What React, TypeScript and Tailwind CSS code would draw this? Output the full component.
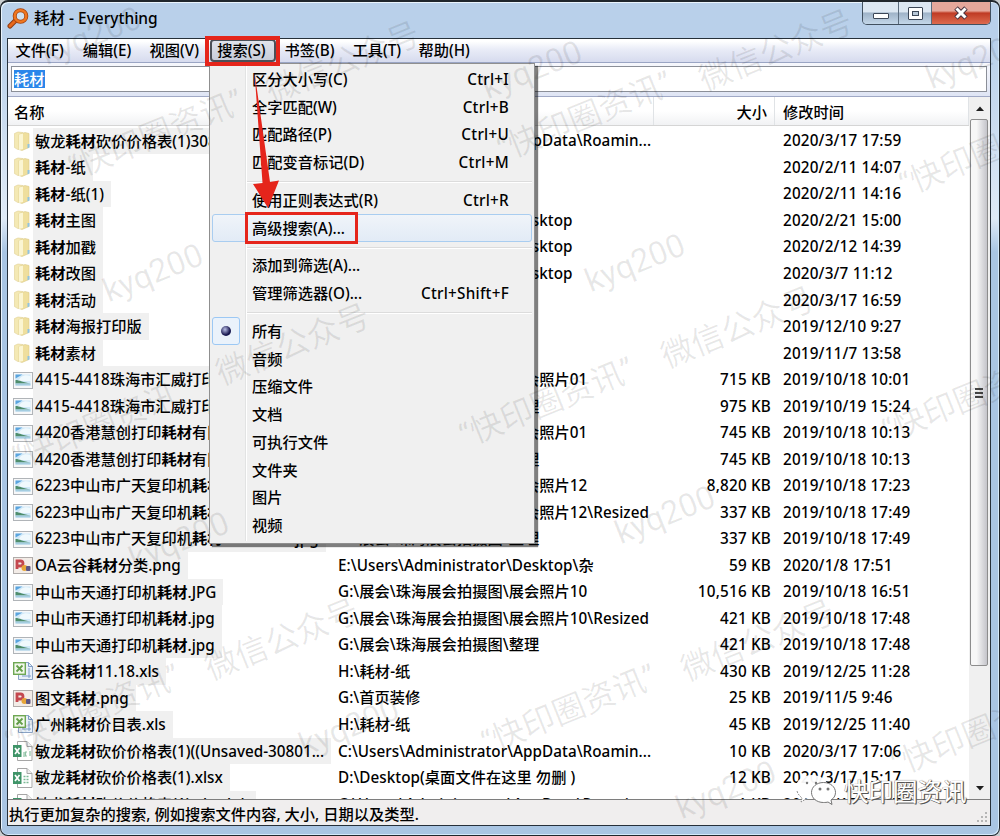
import type { ReactNode } from 'react'

type IconKind = 'folder' | 'jpg' | 'png' | 'xls' | 'csv' | 'xlsx'

interface FileRow {
  icon: IconKind
  name: string
  path: string
  size?: string
  date: string
}

const KEYWORD = '耗材'
const DESKTOP = 'E:\\Users\\Administrator\\Desktop'
const ROAMING = 'C:\\Users\\Administrator\\AppData\\Roamin...'
const PHOTOS = 'G:\\展会\\珠海展会拍摄图\\'

const files: FileRow[] = [
  { icon: 'folder', name: '敏龙耗材砍价价格表(1)308...', path: ROAMING, date: '2020/3/17 17:59' },
  { icon: 'folder', name: '耗材-纸', path: 'H:\\', date: '2020/2/11 14:07' },
  { icon: 'folder', name: '耗材-纸(1)', path: 'H:\\', date: '2020/2/11 14:16' },
  { icon: 'folder', name: '耗材主图', path: DESKTOP, date: '2020/2/21 15:00' },
  { icon: 'folder', name: '耗材加戳', path: DESKTOP, date: '2020/2/12 14:39' },
  { icon: 'folder', name: '耗材改图', path: DESKTOP, date: '2020/3/7 11:12' },
  { icon: 'folder', name: '耗材活动', path: 'G:\\', date: '2020/3/17 16:59' },
  { icon: 'folder', name: '耗材海报打印版', path: 'G:\\', date: '2019/12/10 9:27' },
  { icon: 'folder', name: '耗材素材', path: 'G:\\', date: '2019/11/7 13:58' },
  { icon: 'jpg', name: '4415-4418珠海市汇威打印耗材.JPG', path: PHOTOS + '展会照片01', size: '715 KB', date: '2019/10/18 10:01' },
  { icon: 'jpg', name: '4415-4418珠海市汇威打印耗材.jpg', path: PHOTOS + '整理', size: '975 KB', date: '2019/10/19 15:24' },
  { icon: 'jpg', name: '4420香港慧创打印耗材有限.JPG', path: PHOTOS + '展会照片01', size: '745 KB', date: '2019/10/18 10:13' },
  { icon: 'jpg', name: '4420香港慧创打印耗材有限.jpg', path: PHOTOS + '整理', size: '745 KB', date: '2019/10/18 10:13' },
  { icon: 'jpg', name: '6223中山市广天复印机耗材.JPG', path: PHOTOS + '展会照片12', size: '8,820 KB', date: '2019/10/18 17:23' },
  { icon: 'jpg', name: '6223中山市广天复印机耗材.jpg', path: PHOTOS + '展会照片12\\Resized', size: '337 KB', date: '2019/10/18 17:49' },
  { icon: 'jpg', name: '6223中山市广天复印机耗材Resized-3.jpg', path: PHOTOS + '整理', size: '337 KB', date: '2019/10/18 17:49' },
  { icon: 'png', name: 'OA云谷耗材分类.png', path: DESKTOP + '\\杂', size: '59 KB', date: '2020/1/8 17:51' },
  { icon: 'jpg', name: '中山市天通打印机耗材.JPG', path: PHOTOS + '展会照片10', size: '10,516 KB', date: '2019/10/18 16:51' },
  { icon: 'jpg', name: '中山市天通打印机耗材.jpg', path: PHOTOS + '展会照片10\\Resized', size: '421 KB', date: '2019/10/18 17:48' },
  { icon: 'jpg', name: '中山市天通打印机耗材.jpg', path: PHOTOS + '整理', size: '421 KB', date: '2019/10/18 17:48' },
  { icon: 'xls', name: '云谷耗材11.18.xls', path: 'H:\\耗材-纸', size: '430 KB', date: '2019/12/25 11:28' },
  { icon: 'png', name: '图文耗材.png', path: 'G:\\首页装修', size: '25 KB', date: '2019/11/5 9:46' },
  { icon: 'xls', name: '广州耗材价目表.xls', path: 'H:\\耗材-纸', size: '45 KB', date: '2019/12/25 11:40' },
  { icon: 'csv', name: '敏龙耗材砍价价格表(1)((Unsaved-30801...', path: ROAMING, size: '10 KB', date: '2020/3/17 17:06' },
  { icon: 'xlsx', name: '敏龙耗材砍价价格表(1).xlsx', path: 'D:\\Desktop(桌面文件在这里 勿删 )', size: '12 KB', date: '2020/3/17 15:17' },
  { icon: 'xlsx', name: '敏龙耗材砍价价格表(1).xlsx.lnk', path: ROAMING, size: '1 KB', date: '2020/3/17 15:17' },
]

const menus = ['文件(F)', '编辑(E)', '视图(V)', '搜索(S)', '书签(B)', '工具(T)', '帮助(H)']

interface MenuEntry {
  label: string
  keys?: string
  hover?: boolean
  checked?: boolean
}

const menuGroups: MenuEntry[][] = [
  [
    { label: '区分大小写(C)', keys: 'Ctrl+I' },
    { label: '全字匹配(W)', keys: 'Ctrl+B' },
    { label: '匹配路径(P)', keys: 'Ctrl+U' },
    { label: '匹配变音标记(D)', keys: 'Ctrl+M' },
  ],
  [
    { label: '使用正则表达式(R)', keys: 'Ctrl+R' },
    { label: '高级搜索(A)...', hover: true },
  ],
  [{ label: '添加到筛选(A)...' }, { label: '管理筛选器(O)...', keys: 'Ctrl+Shift+F' }],
  [
    { label: '所有', checked: true },
    { label: '音频' },
    { label: '压缩文件' },
    { label: '文档' },
    { label: '可执行文件' },
    { label: '文件夹' },
    { label: '图片' },
    { label: '视频' },
  ],
]

// 水印：每项为文字和中心点坐标
const watermarks: { text: string; x: number; y: number }[] = [
  { text: 'kyq200', x: 91, y: 36 },
  { text: 'kyq200', x: 532, y: 70 },
  { text: 'kyq200', x: 976, y: 60 },
  { text: 'kyq200', x: 153, y: 273 },
  { text: 'kyq200', x: 635, y: 263 },
  { text: 'kyq200', x: 179, y: 541 },
  { text: 'kyq200', x: 665, y: 515 },
  { text: 'kyq200', x: 349, y: 727 },
  { text: 'kyq200', x: 726, y: 790 },
  { text: '微信公众号', x: 343, y: 63 },
  { text: '微信公众号', x: 776, y: 51 },
  { text: '微信公众号', x: 293, y: 345 },
  { text: '微信公众号', x: 738, y: 328 },
  { text: '微信公众号', x: 282, y: 640 },
  { text: '微信公众号', x: 758, y: 641 },
  { text: '“快印圈资讯”', x: 156, y: 135 },
  { text: '“快印圈资讯”', x: 585, y: 117 },
  { text: '“快印圈资讯”', x: 987, y: 152 },
  { text: '“快印圈资讯”', x: 100, y: 425 },
  { text: '“快印圈资讯”', x: 547, y: 403 },
  { text: '“快印圈资讯”', x: 970, y: 398 },
  { text: '“快印圈资讯”', x: 93, y: 710 },
  { text: '“快印圈资讯”', x: 569, y: 710 },
  { text: '“快印圈资讯”', x: 979, y: 732 },
]

function FileIcon({ kind }: { kind: IconKind }) {
  if (kind === 'folder') {
    return (
      <svg width="20" height="22" viewBox="0 0 20 22">
        <path d="M1.500 3.500 5 2l5 .6v15.800l-5 1.200-3.500-2z" fill="#f4e9b4" stroke="#e0d093" strokeWidth=".6" />
        <path d="m6 4.500 6-2 4 1V17.500L9 20.500l-3-1z" fill="#efdf9d" stroke="#dac988" strokeWidth=".6" />
        <path d="m6 4.500 4-1V19l-4 1z" fill="#fbf5d2" />
        <path d="M14.500 14h2v3.500l-2 .8z" fill="#8fc3e2" />
      </svg>
    )
  }
  if (kind === 'jpg') {
    return (
      <svg width="20" height="22" viewBox="0 0 20 22">
        <rect x=".5" y="3.500" width="19" height="16" fill="#f7f8f9" stroke="#b0b4b8" />
        <path d="M2.500 5.500h15v11h-15z" fill="#cfe8f8" />
        <path d="M2.500 5.500h7l-7 4z" fill="#5aa4de" />
        <path d="M8 8c3-2 6-2 9.500-1v5H5z" fill="#f0f9fd" />
        <path d="M2.500 11c4 0 8 2.500 15 3.500h-15z" fill="#4f8d6c" />
        <path d="M2.500 14.500h15v2h-15z" fill="#a4cde0" />
      </svg>
    )
  }
  if (kind === 'png') {
    return (
      <svg width="20" height="22" viewBox="0 0 20 22">
        <rect x=".5" y="3.500" width="19" height="16" fill="#f3ece7" stroke="#b0acaa" />
        <path d="M4 15V7h3.500a2.500 2.500 0 0 1 0 5H5" fill="none" stroke="#c4484f" strokeWidth="2.800" />
        <circle cx="11.500" cy="14" r="3" fill="#e7a63a" />
        <rect x="13" y="12" width="4.500" height="5" rx="1" fill="#5d5785" />
      </svg>
    )
  }
  if (kind === 'xls') {
    return (
      <svg width="20" height="22" viewBox="0 0 20 22">
        <path d="M5.500 2.500h10l4 4v13h-14z" fill="#e8f0fa" stroke="#8aa3c4" />
        <path d="M15.500 2.500v4h4M16 8v10M9 16h9" fill="none" stroke="#7e9dc8" />
        <rect x=".7" y="2.700" width="11.600" height="11.600" fill="#f2f8ec" stroke="#6fa854" strokeWidth="1.400" />
        <path d="m3.500 5.500 6 6m0-6-6 6" stroke="#65a04b" strokeWidth="1.800" />
      </svg>
    )
  }
  return (
    <svg width="20" height="22" viewBox="0 0 20 22">
      <path d="M4.500 1.500H14l5 5v14H4.500z" fill="#fff" stroke="#a6a6a6" />
      <path d="M14 1.500v5h5" fill="#eee" stroke="#a6a6a6" />
      {kind === 'csv' ? (
        <path d="M11 12v5m3-5h-1.500v4H14m3-5v5" fill="none" stroke="#8fc2a4" strokeWidth="1.200" />
      ) : (
        <path d="M10.500 9.500h6m-6 3h6m-6 3h6" stroke="#7dba96" strokeWidth="1.500" strokeDasharray="2 1" />
      )}
      <rect y="5" width="8.500" height="12" fill="#3f9468" />
      <path d="m2 8 4.500 6m0-6L2 14" stroke="#fff" strokeWidth="1.700" />
    </svg>
  )
}

// 把关键字加粗显示
function highlight(name: string): ReactNode {
  const i = name.indexOf(KEYWORD)
  if (i < 0) return name
  return (
    <>
      {name.slice(0, i)}
      <b className="font-bold">{KEYWORD}</b>
      {name.slice(i + KEYWORD.length)}
    </>
  )
}

function TitleBar() {
  return (
    <div className="flex h-[36px] shrink-0 items-start justify-between">
      <div className="flex items-center pt-[4px]">
        <svg width="22" height="22" viewBox="0 0 22 22">
          <path d="m9 13-6 6" stroke="#8c3a10" strokeWidth="5" strokeLinecap="round" />
          <path d="m9 13-6 6" stroke="#e8681c" strokeWidth="3" strokeLinecap="round" />
          <circle cx="13.500" cy="9" r="5.800" fill="#cfe0f0" stroke="#a3410f" strokeWidth="4" />
          <circle cx="13.500" cy="9" r="5.800" fill="none" stroke="#f0761f" strokeWidth="2.400" />
        </svg>
        <span className="ml-[5px] text-[15.500px] leading-[24px]">耗材 - Everything</span>
      </div>
      <div className="mr-[2px] flex h-[23px] overflow-hidden rounded-b-[5px] border border-t-0 border-[#41505f]">
        <div className="flex w-[36px] items-center justify-center border-r border-[#5b6c7e] bg-linear-to-b from-[#dce7f2] from-45% via-[#9fb3c8] via-50% to-[#c4d7e9]">
          <span className="mt-[6px] h-[6px] w-[16px] rounded-[1px] border border-[#3c4757] bg-white" />
        </div>
        <div className="flex w-[33px] items-center justify-center border-r border-[#5b6c7e] bg-linear-to-b from-[#dce7f2] from-45% via-[#9fb3c8] via-50% to-[#c4d7e9]">
          <span className="flex h-[13px] w-[15px] items-center justify-center rounded-[1px] border border-[#3c4757] bg-white">
            <span className="h-[5px] w-[7px] border border-[#3c4757] bg-[#b9c9d8]" />
          </span>
        </div>
        <div className="flex w-[58px] items-center justify-center bg-linear-to-b from-[#e5a79b] from-40% via-[#bf3a24] via-50% to-[#dd6a4e]">
          <svg width="16" height="14" viewBox="0 0 16 14">
            <path d="m3 2 10 10M13 2 3 12" stroke="#4a3440" strokeWidth="5" />
            <path d="m3.500 2.500 9 9m0-9-9 9" stroke="#fff" strokeWidth="3" />
          </svg>
        </div>
      </div>
    </div>
  )
}

function MenuBar() {
  return (
    <div className="flex h-[24px] shrink-0 items-center border-b border-[#9aa5c4] bg-linear-to-b from-white from-10% via-[#e9ecf7] via-45% to-[#d6dbee]">
      {menus.map((m, i) => (
        <div
          key={m}
          className={
            i === 3
              ? 'mr-[2px] flex h-[23px] w-[66px] items-center justify-center rounded-[4px] border-2 border-[#4c5058] bg-linear-to-b from-[#e0e3ec] to-[#c8cdda] pr-[3px] pb-px'
              : 'flex h-[23px] w-[67.300px] items-center justify-center pr-[4px] pb-px'
          }
        >
          {m}
        </div>
      ))}
    </div>
  )
}

function HeaderRow() {
  return (
    <div className="flex h-[29px] shrink-0 items-center border-b border-[#d5d5d5] bg-linear-to-b from-white from-50% to-[#f1f2f4]">
      <div className="w-[324px] pt-[2px] pl-[6px]">名称</div>
      <div className="h-full w-[322px] border-r border-[#e0e3e6]" />
      <div className="flex h-full w-[121px] items-center justify-end border-r border-[#e0e3e6] pt-[2px] pr-[7px]">
        大小
      </div>
      <div className="flex h-full flex-1 items-center border-r border-[#e0e3e6] pt-[2px] pl-[8px]">修改时间</div>
    </div>
  )
}

function Row({ file }: { file: FileRow }) {
  return (
    <div className="flex h-[26.540px] shrink-0 items-center whitespace-nowrap">
      <div className="flex w-[330px] shrink-0 items-center pl-[5px]">
        <FileIcon kind={file.icon} />
        <span className="bg-[#f0f0f0] pr-[7px] pl-[2px] leading-[26.540px]">{highlight(file.name)}</span>
      </div>
      <div className="w-[336px] shrink-0 tracking-[0.040px]">{file.path}</div>
      <div className="w-[97px] shrink-0 text-right tracking-[0.200px]">{file.size}</div>
      <div className="ml-[12px] tracking-[0.180px]">{file.date}</div>
    </div>
  )
}

function ScrollBar() {
  return (
    <div className="flex w-[21px] shrink-0 flex-col items-center bg-[#f0f0f0]">
      <svg width="10" height="22" viewBox="0 0 10 22">
        <path d="M1 14 5 9.500 9 14z" fill="#1e1e1e" />
      </svg>
      <div className="mr-px flex h-[547px] w-[18px] flex-col items-center justify-center gap-[2px] rounded-[2px] border border-[#8d8d8d] bg-linear-to-r from-[#f7f7f7] from-35% to-[#c4c4ca]">
        <span className="h-[2px] w-[8px] bg-[#454545]" />
        <span className="h-[2px] w-[8px] bg-[#454545]" />
        <span className="h-[2px] w-[8px] bg-[#454545]" />
      </div>
      <div className="flex-1" />
      <svg width="10" height="22" viewBox="0 0 10 22">
        <path d="m1 9 4 4.500L9 9z" fill="#1e1e1e" />
      </svg>
    </div>
  )
}

function SearchMenu() {
  return (
    <div className="absolute top-[63px] left-[209px] flex h-[481px] w-[326px] flex-col border border-[#8f8f8f] bg-[#f0f0f0] pt-[1.500px] shadow-[3px_3px_1px_rgba(0,0,0,0.5)]">
      {/* 图标列分隔线 */}
      <div className="absolute inset-y-[2px] left-[35px] w-[2px] border-r border-white bg-[#e2e3e3]" />
      {menuGroups.map((group, g) => (
        <div key={g}>
          {g > 0 && (
            <div className="flex h-[10px] items-center pl-[37px]">
              <div className="mt-px h-[2px] w-[285px] border-b border-white bg-[#dcdcdc]" />
            </div>
          )}
          {group.map((item) => (
            <div
              key={item.label}
              className={
                item.hover
                  ? 'relative mx-[2px] flex h-[27.750px] items-center rounded-[3px] border border-[#a9cdf0] bg-linear-to-b from-[#f0f4f9] to-[#e2ebf6] pr-[22px]'
                  : 'relative mx-[2px] flex h-[27.750px] items-center border border-transparent pr-[22px]'
              }
            >
              <div className="flex w-[39px] shrink-0">
                {item.checked && (
                  <div className="-ml-px flex h-[28px] w-[28px] items-center justify-center rounded-[3px] border border-[#9cc8f4] bg-[#eaf2fb]">
                    <span className="h-[10px] w-[10px] rounded-full bg-radial-[at_40%_35%] from-[#b9bfe8] to-[#17174f] to-60%" />
                  </div>
                )}
              </div>
              <span className="flex-1">{item.label}</span>
              <span className="tracking-[0.260px]">{item.keys}</span>
            </div>
          ))}
        </div>
      ))}
    </div>
  )
}

function Annotations() {
  return (
    <>
      <div className="absolute top-[36px] left-[205px] h-[30px] w-[75px] border-4 border-[#e5251b]" />
      <div className="absolute top-[212px] left-[245px] h-[32px] w-[113px] border-[3px] border-[#e5251b]" />
      <svg className="absolute top-[70px] left-[245px]" width="40" height="140" viewBox="0 0 40 140">
        <path d="M9.500 2 25 112l9-1.500L23 138 8 114l9.500-1z" fill="#e5251b" />
      </svg>
    </>
  )
}

function WechatMark() {
  return (
    <div className="absolute top-[774px] left-[794px] flex items-center">
      <svg width="46" height="36" viewBox="0 0 46 36">
        <ellipse cx="18" cy="13" rx="16" ry="12" fill="#fff" fillOpacity=".95" />
        <path d="M3 17c1 4 4 6 5 7l-1 4 5-3" fill="#fff" stroke="#777" strokeWidth=".8" strokeDasharray="2 1" />
        <path
          d="M29.500 8.500c7 0 12 4.500 12 10 0 3.500-2 6-4.500 7.500l1 4.500-4-2.500c-1 .4-3 .5-4.500.5-7 0-12-4.500-12-10s5-10 12-10z"
          fill="#fff"
          stroke="#666"
          strokeWidth=".9"
        />
        <g fill="#777">
          <circle cx="13" cy="9" r="1.200" />
          <circle cx="22" cy="9" r="1.200" />
          <circle cx="26" cy="15" r="1.500" />
          <circle cx="34" cy="15" r="1.500" />
        </g>
      </svg>
      <span className="ml-[4px] text-[24.500px] leading-[36px] font-normal text-white [text-shadow:1px_1px_0_#555,-0.500px_-0.500px_0_#999,1px_0_1px_#666]">
        快印圈资讯
      </span>
    </div>
  )
}

export default function App() {
  return (
    <div className="relative h-[836px] w-[1000px] overflow-hidden bg-[#c9cdd0] font-['Noto_Sans','Noto_Sans_CJK_SC',sans-serif] text-[15.250px] font-medium text-black">
      <div className="flex h-full flex-col rounded-[8px] border border-t-2 border-[#20262c] bg-linear-to-b from-[#b9d0ea] from-5% via-[#dfeaf6] via-26% to-[#a9c5e3] to-30% px-[6px] pb-[9px] shadow-[inset_1px_1px_0_#eaf4fd,inset_-1px_-1px_0_#d4e9fa]">
        <TitleBar />
        <div className="mr-[2px] flex min-h-0 flex-1 flex-col border border-[#26303a] bg-white">
          <MenuBar />
          <div className="flex h-[34px] shrink-0 items-center border-b border-[#a0a9c6] bg-linear-to-b from-[#f6f7fc] to-[#dfe5f4] px-[3px] pb-px">
            <div className="flex h-[26px] flex-1 items-center border border-[#8b8f98] bg-white pl-[2px]">
              <span className="bg-[#2a86ea] leading-[18px] text-white">耗材</span>
            </div>
          </div>
          <div className="flex min-h-0 flex-1">
            <div className="flex min-w-0 flex-1 flex-col overflow-hidden">
              <HeaderRow />
              <div className="flex flex-col overflow-hidden pt-[1.500px]">
                {files.map((f, i) => (
                  <Row key={i} file={f} />
                ))}
              </div>
            </div>
            <ScrollBar />
          </div>
          <div className="flex h-[26px] shrink-0 items-center justify-between border-t border-[#7e7e7e] bg-[#f0eeee] pl-[1px]">
            <span className="pt-[3px]">执行更加复杂的搜索, 例如搜索文件内容, 大小, 日期以及类型.</span>
            <svg className="mt-[10px] mr-[2px]" width="12" height="12" viewBox="0 0 12 12" fill="#b5b5b5">
              <path d="M9 0h2v2H9zM9 4h2v2H9zM5 4h2v2H5zM9 8h2v2H9zM5 8h2v2H5zM1 8h2v2H1z" />
            </svg>
          </div>
        </div>
      </div>

      <SearchMenu />

      {watermarks.map((w, i) => (
        <span
          key={i}
          className="pointer-events-none absolute -translate-x-1/2 -translate-y-1/2 -rotate-[22deg] font-['Roboto','Noto_Sans_CJK_SC',sans-serif] text-[32.500px] leading-none font-normal whitespace-nowrap text-black/9"
          style={{ left: w.x, top: w.y }}
        >
          {w.text}
        </span>
      ))}

      <Annotations />
      <WechatMark />
    </div>
  )
}
